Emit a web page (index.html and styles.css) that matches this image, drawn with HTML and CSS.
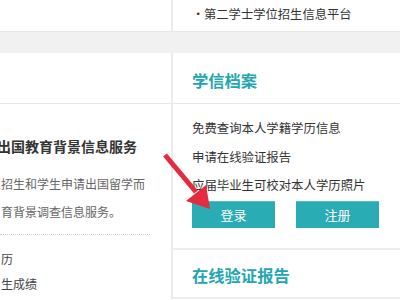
FILE: index.html
```html
<!DOCTYPE html>
<html lang="zh-CN">
<head>
  <meta charset="UTF-8">
  <title>学信网</title>
  <link rel="stylesheet" href="styles.css">
</head>
<body>
  <div class="page">
    <div class="row row-top">
      <div class="main"></div>
      <div class="side">
        <ul class="top-links">
          <li>第二学士学位招生信息平台</li>
        </ul>
      </div>
    </div>

    <div class="band"></div>

    <div class="row">
      <div class="main">
        <div class="box-head"></div>
        <div class="box-body">
          <h3 class="service-title">出国教育背景信息服务</h3>
          <div class="service-desc">
            <span>招生和学生申请出国留学而</span>
            <span>育背景调查信息服务。</span>
          </div>
          <ul class="service-list">
            <li>历</li>
            <li>生成绩</li>
          </ul>
        </div>
      </div>

      <div class="side">
        <div class="side-box">
          <h2 class="side-title">学信档案</h2>
          <div class="side-body">
            <ul class="side-list">
              <li>免费查询本人学籍学历信息</li>
              <li>申请在线验证报告</li>
              <li>应届毕业生可校对本人学历照片</li>
            </ul>
            <div class="btns">
              <button type="button" class="btn">登录</button>
              <button type="button" class="btn">注册</button>
            </div>
          </div>
        </div>
        <div class="side-box">
          <h2 class="side-title">在线验证报告</h2>
        </div>
      </div>
    </div>

    <svg class="arrow" width="400" height="300" viewBox="0 0 400 300">
      <line x1="165" y1="155" x2="196" y2="192" stroke="#e42b40" stroke-width="5"/>
      <polygon points="210,209 186,201 206,185" fill="#e42b40"/>
    </svg>
  </div>
</body>
</html>
```

FILE: styles.css
```css
body {
  margin: 0;
  font-family: "Noto Sans CJK SC", "Noto Sans", sans-serif;
  color: #444;
  background: #fff;
  overflow: hidden;
}

.page {
  position: relative;
  width: 400px;
  height: 300px;
  overflow: hidden;
}

ul {
  list-style: none;
  margin: 0;
  padding: 0;
}

.row {
  display: flex;
}

.main {
  width: 171px;
  flex-shrink: 0;
}

.side {
  flex: 1;
  border-left: 2px solid #ebebeb;
}

.row-top {
  height: 31px;
}

.top-links {
  padding: 4px 0 0 31px;
  font-size: 12.3px;
  line-height: 20px;
  color: #333;
}

.top-links li::before {
  content: "•";
  display: inline-block;
  width: 12px;
  margin-left: -12px;
}

.band {
  height: 21px;
  background: #f1f1f1;
  border-top: 1px solid #e7e7e7;
}

/* left column */
.box-head {
  height: 50px;
  border-bottom: 1px solid #e8e8e8;
}

.box-body {
  padding-top: 32px;
}

.service-title {
  margin: 0 0 14px -3px;
  font-size: 14px;
  line-height: 20px;
  font-weight: bold;
  color: #333;
  white-space: nowrap;
}

.service-desc {
  width: 150px;
  padding-bottom: 8px;
  border-bottom: 1px dotted #cfcfcf;
  font-size: 12px;
  line-height: 28px;
  color: #666;
}

.service-desc span {
  display: block;
  padding-left: 1px;
  white-space: nowrap;
}

.service-list {
  margin-top: 11px;
  padding-left: 1px;
  font-size: 12px;
  line-height: 25px;
  color: #444;
}

/* right column */
.side-box {
  border-bottom: 2px solid #ececec;
}

.side-title {
  margin: 0;
  padding: 5px 0 0 19px;
  height: 45px;
  line-height: 45px;
  font-size: 16.3px;
  font-weight: bold;
  color: #22a6b0;
  border-bottom: 1px solid #e8e8e8;
}

.side-box:last-child .side-title {
  padding-top: 0;
  height: 47px;
  line-height: 50px;
  border-bottom: none;
}

.side-body {
  padding: 10px 0 20px 19px;
}

.side-list {
  font-size: 12.4px;
  line-height: 28.5px;
  color: #333;
  white-space: nowrap;
}

.btns {
  display: flex;
  gap: 21px;
  margin-top: 1px;
}

.btn {
  width: 83px;
  height: 27px;
  padding: 0;
  border: none;
  border-top: 1px solid #4fc0c6;
  background-color: #2aacb4;
  color: #fff;
  font-family: inherit;
  font-size: 13px;
  cursor: pointer;
}

.btn:hover {
  background-color: #239ea6;
}

.arrow {
  position: absolute;
  left: 0;
  top: 0;
  pointer-events: none;
}
```
